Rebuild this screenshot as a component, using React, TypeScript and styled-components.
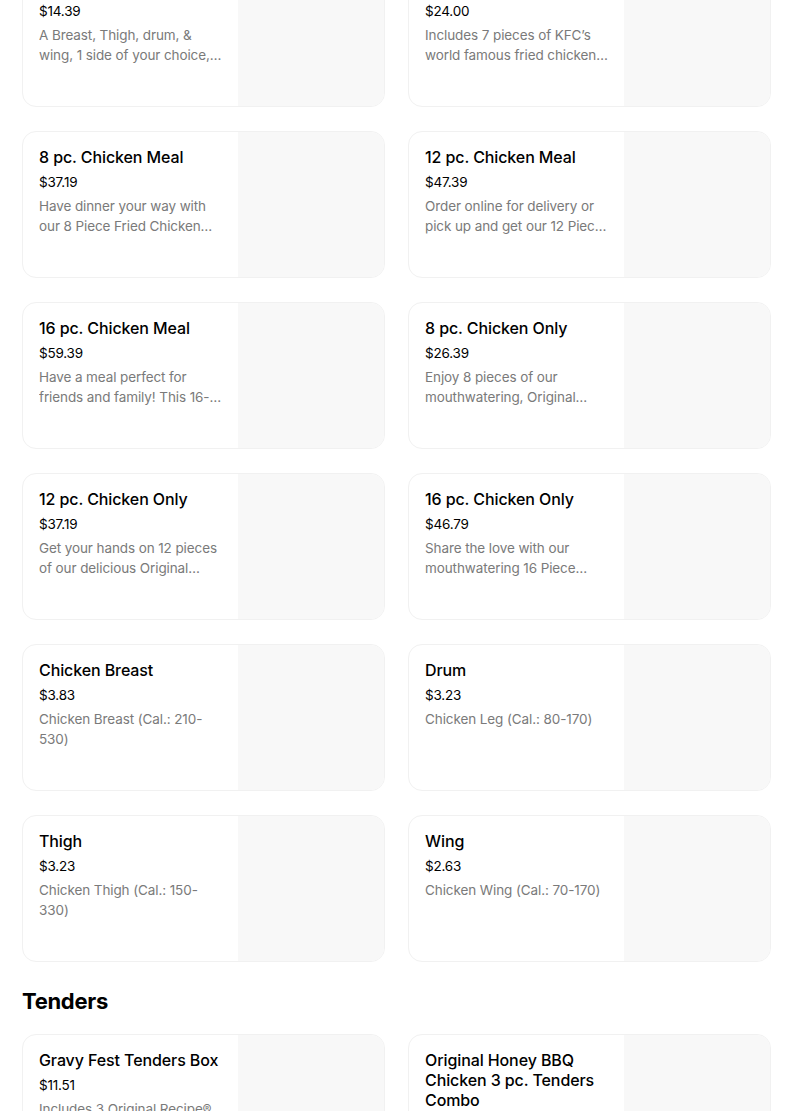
import React from "react";
import styled, { createGlobalStyle } from "styled-components";

const Global = createGlobalStyle`
  html, body { margin: 0; padding: 0; background: #ffffff; }
  body { font-family: Inter, "Noto Sans", Arial, sans-serif; color: #000; overflow: hidden; }
`;

const Page = styled.div`
  width: 749px;
  padding: 0 0 0 22px;
  margin-top: -40px;
  display: flex;
  flex-direction: column;
`;

const Grid = styled.div`
  display: grid;
  grid-template-columns: 363px 363px;
  column-gap: 23px;
  row-gap: 24px;
`;

const Card = styled.div`
  display: flex;
  height: 147px;
  box-sizing: border-box;
  border: 1px solid #f1f1f1;
  border-radius: 14px;
  overflow: hidden;
  background: #fff;
`;

const Info = styled.div`
  flex: 1;
  min-width: 0;
  padding: 15px 16px 0 16px;
  display: flex;
  flex-direction: column;
`;

const Title = styled.div`
  font-size: 16px;
  font-weight: 500;
  line-height: 20px;
  color: #000;
  letter-spacing: -0.1px;
`;

const Price = styled.div`
  margin-top: 5px;
  font-size: 13.5px;
  line-height: 20px;
  color: #000;
  letter-spacing: -0.2px;
`;

const Desc = styled.div`
  margin-top: 4px;
  font-size: 13.5px;
  line-height: 20px;
  color: #7a7a7a;
  letter-spacing: -0.1px;
  display: -webkit-box;
  -webkit-line-clamp: 2;
  -webkit-box-orient: vertical;
  overflow: hidden;
`;

const Thumb = styled.div`
  width: 146px;
  flex: none;
  background: #f8f8f8;
`;

const SectionTitle = styled.h2`
  margin: 24px 0 0 0;
  height: 48px;
  font-size: 22px;
  font-weight: 700;
  line-height: 30px;
  letter-spacing: -0.3px;
  color: #000;
`;

type Item = { title: string; price: string; desc: string };

const chicken: Item[] = [
  { title: "Chicken Meal", price: "$14.39", desc: "A Breast, Thigh, drum, & wing, 1 side of your choice, a biscuit and a drink." },
  { title: "7 pc. Chicken", price: "$24.00", desc: "Includes 7 pieces of KFC’s world famous fried chicken and more." },
  { title: "8 pc. Chicken Meal", price: "$37.19", desc: "Have dinner your way with our 8 Piece Fried Chicken Meal and sides." },
  { title: "12 pc. Chicken Meal", price: "$47.39", desc: "Order online for delivery or pick up and get our 12 Piece Chicken Meal." },
  { title: "16 pc. Chicken Meal", price: "$59.39", desc: "Have a meal perfect for friends and family! This 16-piece meal." },
  { title: "8 pc. Chicken Only", price: "$26.39", desc: "Enjoy 8 pieces of our mouthwatering, Original Recipe chicken." },
  { title: "12 pc. Chicken Only", price: "$37.19", desc: "Get your hands on 12 pieces of our delicious Original Recipe chicken." },
  { title: "16 pc. Chicken Only", price: "$46.79", desc: "Share the love with our mouthwatering 16 Piece Chicken bucket." },
  { title: "Chicken Breast", price: "$3.83", desc: "Chicken Breast (Cal.: 210-530)" },
  { title: "Drum", price: "$3.23", desc: "Chicken Leg (Cal.: 80-170)" },
  { title: "Thigh", price: "$3.23", desc: "Chicken Thigh (Cal.: 150-330)" },
  { title: "Wing", price: "$2.63", desc: "Chicken Wing (Cal.: 70-170)" },
];

const tenders: Item[] = [
  { title: "Gravy Fest Tenders Box", price: "$11.51", desc: "Includes 3 Original Recipe® Tenders, mashed potatoes and gravy." },
  { title: "Original Honey BBQ Chicken 3 pc. Tenders Combo", price: "$12.59", desc: "Includes 3 Tenders, a side and a drink." },
];

const MenuCard = ({ item }: { item: Item }) => (
  <Card>
    <Info>
      <Title>{item.title}</Title>
      <Price>{item.price}</Price>
      <Desc>{item.desc}</Desc>
    </Info>
    <Thumb />
  </Card>
);

export default function App() {
  return (
    <>
      <Global />
      <Page>
        <Grid>
          {chicken.map((it, i) => (
            <MenuCard key={i} item={it} />
          ))}
        </Grid>
        <SectionTitle>Tenders</SectionTitle>
        <Grid>
          {tenders.map((it, i) => (
            <MenuCard key={i} item={it} />
          ))}
        </Grid>
      </Page>
    </>
  );
}
